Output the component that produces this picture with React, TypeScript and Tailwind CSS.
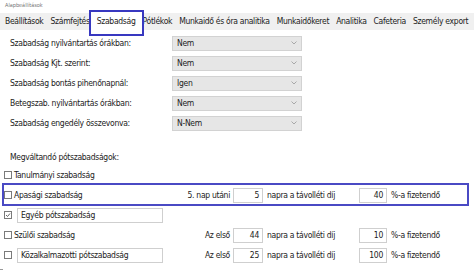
import React from 'react';

const tabs = [
  'Beállítások',
  'Számfejtés',
  'Szabadság',
  'Pótlékok',
  'Munkaidő és óra analitika',
  'Munkaidőkeret',
  'Analitika',
  'Cafeteria',
  'Személy export',
];

const selects = [
  { label: 'Szabadság nyilvántartás órákban:', value: 'Nem' },
  { label: 'Szabadság Kjt. szerint:', value: 'Nem' },
  { label: 'Szabadság bontás pihenőnapnál:', value: 'Igen' },
  { label: 'Betegszab. nyilvántartás órákban:', value: 'Nem' },
  { label: 'Szabadság engedély összevonva:', value: 'N-Nem' },
];

const Check = ({ checked }: { checked?: boolean }) => (
  <span className="w-[8px] h-[8px] border border-[#7a7a7a] bg-white flex items-center justify-center shrink-0">
    {checked && (
      <svg width="6" height="6" viewBox="0 0 6 6">
        <path d="M1 3 L2.5 4.5 L5 1.5" stroke="#555" strokeWidth="0.9" fill="none" />
      </svg>
    )}
  </span>
);

const NumBox = ({ v, w }: { v: string; w: string }) => (
  <span className={`${w} h-[15px] border border-[#cfcfcf] bg-white flex items-center justify-end pr-[3px] shrink-0`}>{v}</span>
);

interface RowProps {
  label: string;
  checked?: boolean;
  boxed?: boolean;
  prefix?: string;
  days?: string;
  pct?: string;
  highlight?: boolean;
}

const LeaveRow = ({ label, checked, boxed, prefix, days, pct, highlight }: RowProps) => (
  <div className="relative flex items-center h-[20px] whitespace-nowrap">
    <div className="flex items-center w-[233px] pl-[4px]">
      <Check checked={checked} />
      {boxed ? (
        <span className="ml-[5px] w-[146px] h-[15px] border border-[#cfcfcf] flex items-center pl-[3px]">{label}</span>
      ) : (
        <span className="ml-[2px]">{label}</span>
      )}
      {prefix && <span className="ml-auto pr-[3px]">{prefix}</span>}
    </div>
    {days && (
      <>
        <NumBox v={days} w="w-[30px]" />
        <span className="ml-[4px] w-[92px]">napra a távolléti díj</span>
        <NumBox v={pct!} w="w-[28px]" />
        <span className="ml-[4px]">%-a fizetendő</span>
      </>
    )}
    {highlight && (
      <div className="absolute left-[2px] right-[5px] -top-[2px] -bottom-[1px] border-2 border-[#4a4ac4] pointer-events-none" />
    )}
  </div>
);

export default function App() {
  return (
    <div
      className="w-[474px] h-[274px] bg-white text-[8.5px] tracking-[-0.3px] text-[#222] overflow-hidden"
      style={{ fontFamily: '"DejaVu Sans Condensed", "DejaVu Sans", sans-serif' }}
    >
      <div className="h-[13px] pl-[5px] pt-[3px] text-[5.5px] tracking-normal text-[#777] leading-none">Alapbeállítások</div>

      <div className="flex h-[17px] items-center bg-[#f0f0f0] pl-[5px] gap-[7px] whitespace-nowrap">
        {tabs.map((t) =>
          t === 'Szabadság' ? (
            <div key={t} className="relative flex items-center h-full">
              <div className="absolute -left-[8px] -right-[8px] -top-[3px] -bottom-[6px] bg-white border-2 border-[#3838c0]" />
              <span className="relative">{t}</span>
            </div>
          ) : (
            <span key={t}>{t}</span>
          )
        )}
      </div>

      <div className="pt-[3px]">
        {selects.map((s) => (
          <div key={s.label} className="flex items-center h-[20px] pl-[10px]">
            <span className="w-[162px]">{s.label}</span>
            <div className="w-[130px] h-[15px] bg-[#e6e6e6] border border-[#d2d2d2] flex items-center pl-[4px] pr-[4px]">
              <span className="flex-1">{s.value}</span>
              <svg width="6" height="4" viewBox="0 0 6 4">
                <path d="M0.5 0.5 L3 3 L5.5 0.5" stroke="#999" strokeWidth="0.8" fill="none" />
              </svg>
            </div>
          </div>
        ))}
      </div>

      <div className="pl-[10px] mt-[16px] h-[16px] flex items-center">Megváltandó pótszabadságok:</div>

      <div>
        <LeaveRow label="Tanulmányi szabadság" />
        <LeaveRow label="Apasági szabadság" prefix="5. nap utáni" days="5" pct="40" highlight />
        <LeaveRow label="Egyéb pótszabadság" checked boxed />
        <LeaveRow label="Szülői szabadság" prefix="Az első" days="44" pct="10" />
        <LeaveRow label="Közalkalmazotti pótszabadság" boxed prefix="Az első" days="25" pct="100" />
      </div>

      <div className="w-[3px] h-[1px] bg-[#999] mt-[4px]" />
    </div>
  );
}
